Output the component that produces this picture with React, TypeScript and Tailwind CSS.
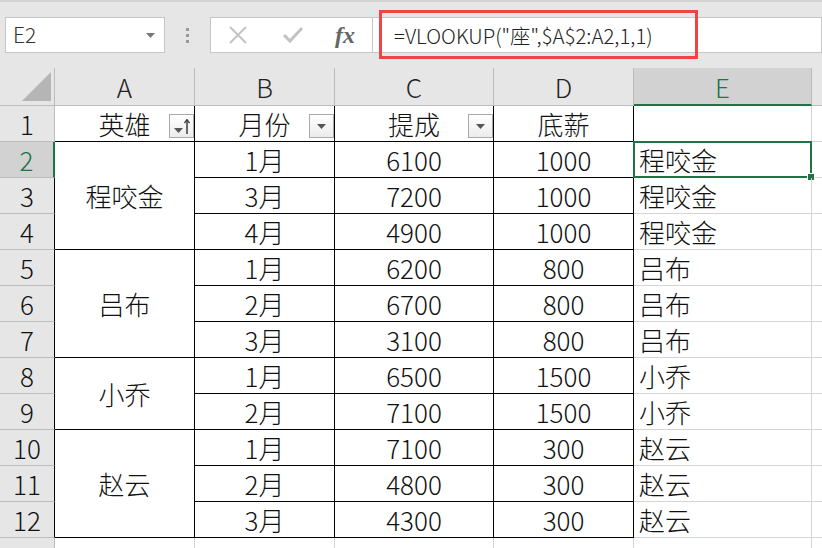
import { ReactNode } from "react";

const FONT = { fontFamily: '"Noto Sans CJK SC", "Liberation Sans", sans-serif' };

type Row = { hero?: string; span?: number; month: string; bonus: string; base: string; e: string };

const rows: Row[] = [
  { hero: "程咬金", span: 3, month: "1月", bonus: "6100", base: "1000", e: "程咬金" },
  { month: "3月", bonus: "7200", base: "1000", e: "程咬金" },
  { month: "4月", bonus: "4900", base: "1000", e: "程咬金" },
  { hero: "吕布", span: 3, month: "1月", bonus: "6200", base: "800", e: "吕布" },
  { month: "2月", bonus: "6700", base: "800", e: "吕布" },
  { month: "3月", bonus: "3100", base: "800", e: "吕布" },
  { hero: "小乔", span: 2, month: "1月", bonus: "6500", base: "1500", e: "小乔" },
  { month: "2月", bonus: "7100", base: "1500", e: "小乔" },
  { hero: "赵云", span: 3, month: "1月", bonus: "7100", base: "300", e: "赵云" },
  { month: "2月", bonus: "4800", base: "300", e: "赵云" },
  { month: "3月", bonus: "4300", base: "300", e: "赵云" },
];

function FilterButton({ sorted }: { sorted?: boolean }) {
  return (
    <div className="absolute right-0 bottom-[3px] w-[25px] h-[24px] border border-[#a9a9a9] bg-gradient-to-b from-white to-[#ececec] flex items-center justify-center gap-[1px]">
      <svg width="9" height="5" viewBox="0 0 9 5" className={sorted ? "mt-[8px]" : "mt-[1px]"}>
        <path d="M0 0 H9 L4.5 5 Z" fill="#555" />
      </svg>
      {sorted && (
        <svg width="6" height="15" viewBox="0 0 6 15">
          <path d="M3 1 V15" stroke="#444" strokeWidth="1.6" />
          <path d="M0.5 4 L3 0.5 L5.5 4" stroke="#444" strokeWidth="1.3" fill="none" />
        </svg>
      )}
    </div>
  );
}

function ColHead({ children, active }: { children: ReactNode; active?: boolean }) {
  return (
    <div
      className={
        active
          ? "flex items-center justify-center bg-[#d2d2d2] text-[#217346] border-r border-[#bcbcbc] border-b-2 border-b-[#217346] text-[26px]"
          : "flex items-center justify-center bg-[#e6e6e6] text-[#222] border-r border-[#bcbcbc] border-b border-b-[#bcbcbc] text-[26px]"
      }
    >
      {children}
    </div>
  );
}

export default function App() {
  return (
    <div className="w-[822px] h-[548px] overflow-hidden bg-white relative font-light" style={FONT}>
      {/* formula bar */}
      <div className="h-[68px] bg-[#e6e6e6] border-t-2 border-[#d3d3d3] relative">
        <div className="flex items-center pt-[15px]">
          <div className="ml-[5px] w-[160px] h-[36px] bg-white border border-[#c6c6c6] flex items-center justify-between pl-[7px] pr-[9px]">
            <span className="text-[21px] text-[#333]">E2</span>
            <svg width="9" height="5" viewBox="0 0 9 5">
              <path d="M0 0 H9 L4.5 5 Z" fill="#777" />
            </svg>
          </div>
          <div className="w-[45px] flex flex-col items-center gap-[3px]">
            <span className="w-[3px] h-[3px] bg-[#9a9a9a]" />
            <span className="w-[3px] h-[3px] bg-[#9a9a9a]" />
            <span className="w-[3px] h-[3px] bg-[#9a9a9a]" />
          </div>
          <div className="w-[163px] h-[36px] bg-white border border-[#c6c6c6] flex items-center">
            <svg width="20" height="20" viewBox="0 0 20 20" className="ml-[17px]">
              <path d="M2 2 L18 18 M18 2 L2 18" stroke="#c3c3c3" strokeWidth="2" />
            </svg>
            <svg width="22" height="18" viewBox="0 0 22 18" className="ml-[34px]">
              <path d="M2 9 L8 15 L20 2" stroke="#c3c3c3" strokeWidth="3" fill="none" />
            </svg>
            <span
              className="ml-[31px] text-[24px] italic font-bold text-[#666]"
              style={{ fontFamily: '"Liberation Serif", serif' }}
            >
              fx
            </span>
          </div>
          <div className="flex-1 h-[36px] bg-white border border-l-0 border-[#c6c6c6] flex items-center pl-[21px]">
            <span className="text-[20.4px] text-[#222]">=VLOOKUP("座",$A$2:A2,1,1)</span>
          </div>
        </div>
        <div className="absolute left-[379px] top-[8px] w-[319px] h-[49px] border-[3px] border-[#f04444]" />
      </div>

      {/* sheet */}
      <div className="grid grid-cols-[55px_140px_140px_159px_140px_178px_1fr] grid-rows-[38px_repeat(13,36px)] text-[#111] text-[26px]">
        <div className="bg-[#e6e6e6] border-r border-b border-[#bcbcbc] flex items-end justify-end pr-[3px] pb-[4px]">
          <svg width="29" height="29" viewBox="0 0 29 29">
            <path d="M29 0 V29 H0 Z" fill="#b5b5b5" />
          </svg>
        </div>
        <ColHead>A</ColHead>
        <ColHead>B</ColHead>
        <ColHead>C</ColHead>
        <ColHead>D</ColHead>
        <ColHead active>E</ColHead>
        <div className="bg-[#e6e6e6] border-b border-[#bcbcbc]" />

        {/* row 1 */}
        <div className="bg-[#e6e6e6] border-r border-b border-[#bcbcbc] flex items-center justify-center">1</div>
        <div className="relative border-r border-b border-black flex items-center justify-center">
          英雄
          <FilterButton sorted />
        </div>
        <div className="relative border-r border-b border-black flex items-center justify-center">
          月份
          <FilterButton />
        </div>
        <div className="relative border-r border-b border-black flex items-center justify-center">
          提成
          <FilterButton />
        </div>
        <div className="border-r border-b border-black flex items-center justify-center">底薪</div>
        <div className="border-r border-b border-[#d4d4d4]" />
        <div className="border-b border-[#d4d4d4]" />

        {rows.map((r, i) => {
          const n = i + 2;
          return [
            <div
              key={`h${n}`}
              className={
                n === 2
                  ? "bg-[#d2d2d2] text-[#217346] border-r-2 border-r-[#217346] border-b border-b-[#bcbcbc] flex items-center justify-center"
                  : "bg-[#e6e6e6] border-r border-r-black border-b border-b-[#bcbcbc] flex items-center justify-center"
              }
              style={{ gridColumn: 1, gridRow: n + 1 }}
            >
              {n}
            </div>,
            r.hero ? (
              <div
                key={`a${n}`}
                className="border-r border-b border-black flex items-center justify-center"
                style={{ gridColumn: 2, gridRow: `${n + 1} / span ${r.span}` }}
              >
                {r.hero}
              </div>
            ) : null,
            <div
              key={`b${n}`}
              className="border-r border-b border-black flex items-center justify-center"
              style={{ gridColumn: 3, gridRow: n + 1 }}
            >
              {r.month}
            </div>,
            <div
              key={`c${n}`}
              className="border-r border-b border-black flex items-center justify-center"
              style={{ gridColumn: 4, gridRow: n + 1 }}
            >
              {r.bonus}
            </div>,
            <div
              key={`d${n}`}
              className="border-r border-b border-black flex items-center justify-center"
              style={{ gridColumn: 5, gridRow: n + 1 }}
            >
              {r.base}
            </div>,
            <div
              key={`e${n}`}
              className="relative border-r border-b border-[#d4d4d4] flex items-center pl-[5px]"
              style={{ gridColumn: 6, gridRow: n + 1 }}
            >
              {r.e}
              {n === 2 && (
                <div className="absolute -left-px -top-px -right-px -bottom-px border-2 border-[#217346]">
                  <div className="absolute -right-[5px] -bottom-[5px] w-[8px] h-[8px] bg-[#217346] border border-white" />
                </div>
              )}
            </div>,
            <div key={`f${n}`} className="border-b border-[#d4d4d4]" style={{ gridColumn: 7, gridRow: n + 1 }} />,
          ];
        })}

        {/* row 13, cut off by the window like in the screenshot */}
        <div className="bg-[#e6e6e6] border-r border-[#bcbcbc] flex items-start justify-center pt-[6px]">13</div>
        <div className="border-r border-[#d4d4d4]" />
        <div className="border-r border-[#d4d4d4]" />
        <div className="border-r border-[#d4d4d4]" />
        <div className="border-r border-[#d4d4d4]" />
        <div className="border-r border-[#d4d4d4]" />
        <div />
      </div>
    </div>
  );
}
